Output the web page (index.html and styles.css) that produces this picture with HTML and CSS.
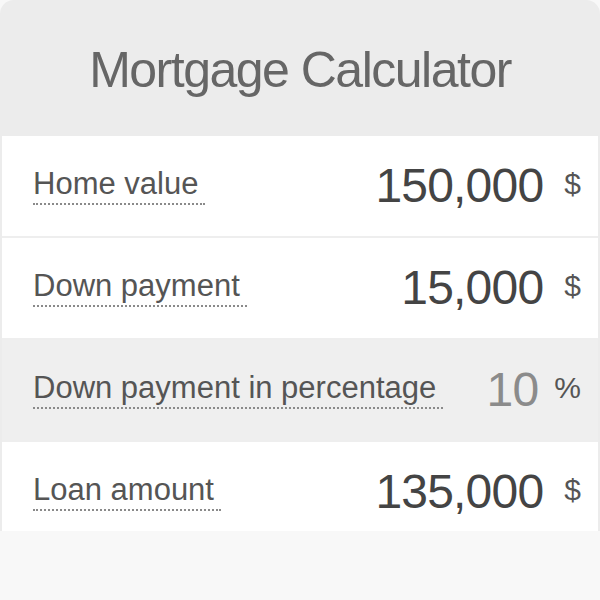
FILE: index.html
```html
<!DOCTYPE html>
<html lang="en">
<head>
<meta charset="utf-8">
<title>Mortgage Calculator</title>
<link rel="stylesheet" href="styles.css">
</head>
<body>
<div class="calc">
  <header class="calc-header">
    <h1 class="calc-title">Mortgage Calculator</h1>
  </header>
  <div class="calc-rows">
    <div class="row">
      <span class="label">Home value</span>
      <span class="value">150,000</span>
      <span class="unit">$</span>
    </div>
    <div class="row">
      <span class="label">Down payment</span>
      <span class="value">15,000</span>
      <span class="unit">$</span>
    </div>
    <div class="row row-muted">
      <span class="label">Down payment in percentage</span>
      <span class="value value-muted">10</span>
      <span class="unit unit-wide">%</span>
    </div>
    <div class="row">
      <span class="label">Loan amount</span>
      <span class="value">135,000</span>
      <span class="unit">$</span>
    </div>
  </div>
</div>
</body>
</html>
```
FILE: styles.css
```css
html, body {
  margin: 0;
  padding: 0;
}

body {
  background: #f8f8f8;
  font-family: "Liberation Sans", Arial, sans-serif;
}

.calc {
  background: #ececec;
  border-radius: 14px 14px 0 0;
  padding: 0 2px;
  height: 531px;
  overflow: hidden;
  box-sizing: border-box;
}

.calc-header {
  height: 136px;
  box-sizing: border-box;
  padding-top: 4px;
  display: flex;
  align-items: center;
  justify-content: center;
}

.calc-title {
  margin: 0;
  font-size: 50px;
  line-height: 1;
  font-weight: normal;
  color: #666;
  letter-spacing: -1.5px;
}

.calc-rows {
  background: #fff;
  border-radius: 3px 3px 0 0;
}

.row {
  display: flex;
  align-items: flex-start;
  height: 100px;
  padding: 0 17px 0 31px;
  background: #fff;
  border-bottom: 2px solid #eeeeee;
}

.row-muted {
  background: #efefef;
}

.label {
  margin-top: 32px;
  font-size: 31px;
  line-height: 1;
  color: #555;
  padding: 0 7px 4px 0;
  border-bottom: 2px dotted #8a8a8a;
}

.value {
  margin: 26px 21px 0 auto;
  font-size: 48px;
  line-height: 1;
  color: #444;
  letter-spacing: -0.8px;
}

.value-muted {
  color: #8b8b8b;
  margin-right: 16px;
}

.unit {
  margin-top: 33px;
  font-size: 30px;
  line-height: 1;
  color: #555;
}
```
